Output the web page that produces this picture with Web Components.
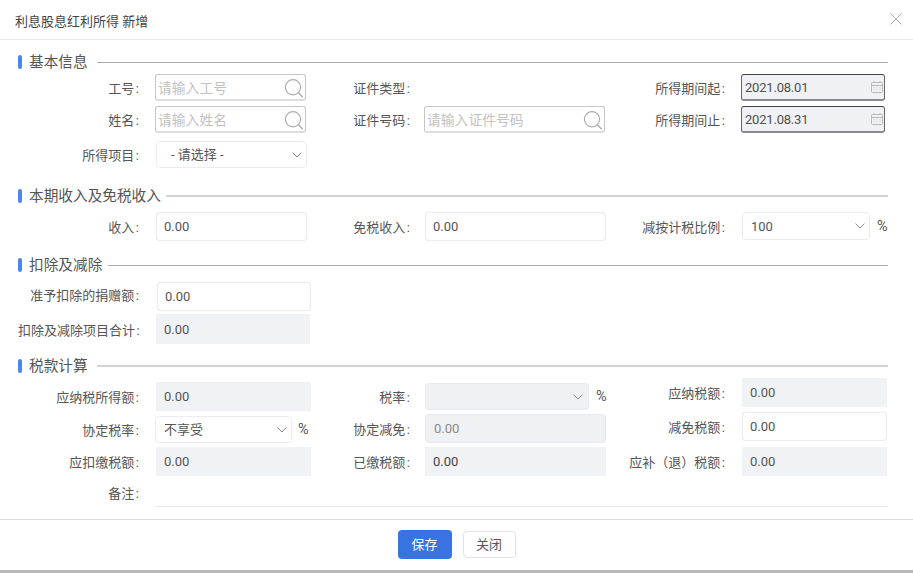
<!DOCTYPE html>
<html lang="zh-CN">
<head>
<meta charset="utf-8">
<title>利息股息红利所得 新增</title>
<style>
html,body{margin:0;height:100%;overflow:hidden;background:#b9b9b9}
body{font-family:Roboto,"Noto Sans CJK SC",sans-serif;font-size:13px;color:#555}
</style>
</head>
<body>
<tax-dialog heading="利息股息红利所得 新增">
  <tax-section heading="基本信息" style="margin-top:12px" gap="9">
    <tax-row style="margin-top:2px">
      <tax-field col="1" label="工号"><tax-input kind="search" placeholder="请输入工号" style="width:151px;height:27px;margin-left:-1px"></tax-input></tax-field>
      <tax-field col="2" label="证件类型"></tax-field>
      <tax-field col="3" label="所得期间起"><tax-input kind="date" value="2021.08.01" style="width:144px;height:27px"></tax-input></tax-field>
    </tax-row>
    <tax-row style="margin-top:5px">
      <tax-field col="1" label="姓名"><tax-input kind="search" placeholder="请输入姓名" style="width:151px;height:27px;margin-left:-1px"></tax-input></tax-field>
      <tax-field col="2" label="证件号码"><tax-input kind="search" placeholder="请输入证件号码" style="width:181px;height:27px"></tax-input></tax-field>
      <tax-field col="3" label="所得期间止"><tax-input kind="date" value="2021.08.31" style="width:144px;height:27px"></tax-input></tax-field>
    </tax-row>
    <tax-row style="margin-top:8px">
      <tax-field col="1" label="所得项目"><tax-input kind="select" value="- 请选择 -" indent="14" style="width:151px;height:27px"></tax-input></tax-field>
    </tax-row>
  </tax-section>

  <tax-section heading="本期收入及免税收入" style="margin-top:18px" gap="5" thick>
    <tax-row style="margin-top:6px">
      <tax-field col="1" label="收入"><tax-input kind="plain" value="0.00" style="width:151px;height:29px"></tax-input></tax-field>
      <tax-field col="2" label="免税收入"><tax-input kind="plain" value="0.00" style="width:181px;height:29px;margin-left:1px"></tax-input></tax-field>
      <tax-field col="3" label="减按计税比例"><tax-input kind="select" value="100" style="width:128px;height:28px;margin-left:1px"></tax-input><span class="unit" style="margin-left:7px">%</span></tax-field>
    </tax-row>
  </tax-section>

  <tax-section heading="扣除及减除" style="margin-top:14px" gap="6">
    <tax-row style="margin-top:7px">
      <tax-field col="1" label="准予扣除的捐赠额" shift="-2"><tax-input kind="plain" value="0.00" style="width:154px;height:29px;margin-left:1px"></tax-input></tax-field>
    </tax-row>
    <tax-row style="margin-top:3px">
      <tax-field col="1" label="扣除及减除项目合计"><tax-input kind="readonly" value="0.00" style="width:154px;height:30px"></tax-input></tax-field>
    </tax-row>
  </tax-section>

  <tax-section heading="税款计算" style="margin-top:12px" gap="9" thick>
    <tax-row style="margin-top:2px">
      <tax-field col="1" label="应纳税所得额" style="margin-top:4px"><tax-input kind="readonly" value="0.00" style="width:155px;height:29px"></tax-input></tax-field>
      <tax-field col="2" label="税率" style="margin-top:5px"><tax-input kind="select-off" style="width:164px;height:27px;margin-left:1px"></tax-input><span class="unit" style="margin-left:7px">%</span></tax-field>
      <tax-field col="3" label="应纳税额"><tax-input kind="readonly" value="0.00" style="width:145px;height:29px;margin-left:1px"></tax-input></tax-field>
    </tax-row>
    <tax-row style="margin-top:1px">
      <tax-field col="1" label="协定税率" style="margin-top:4px"><tax-input kind="select" value="不享受" style="width:137px;height:27px;margin-left:-1px"></tax-input><span class="unit" style="margin-left:6px">%</span></tax-field>
      <tax-field col="2" label="协定减免" style="margin-top:2px"><tax-input kind="off" value="0.00" style="width:181px;height:29px;margin-left:1px"></tax-input></tax-field>
      <tax-field col="3" label="减免税额"><tax-input kind="plain" value="0.00" style="width:145px;height:29px;margin-left:1px"></tax-input></tax-field>
    </tax-row>
    <tax-row style="margin-top:4px">
      <tax-field col="1" label="应扣缴税额"><tax-input kind="readonly" value="0.00" style="width:155px;height:29px"></tax-input></tax-field>
      <tax-field col="2" label="已缴税额"><tax-input kind="readonly" value="0.00" strong style="width:181px;height:29px;margin-left:1px"></tax-input></tax-field>
      <tax-field col="3" label="应补（退）税额"><tax-input kind="readonly" value="0.00" style="width:145px;height:29px;margin-left:1px"></tax-input></tax-field>
    </tax-row>
    <tax-row style="margin-top:4px">
      <tax-field col="1" label="备注" wide shift="0"><tax-input kind="remark" style="width:733px;height:27px;margin-left:-1px"></tax-input></tax-field>
    </tax-row>
  </tax-section>
  <tax-button slot="footer" primary>保存</tax-button>
  <tax-button slot="footer">关闭</tax-button>
</tax-dialog>

<script>
function shadow(el, html){
  const t = document.createElement('template');
  t.innerHTML = html;
  el.attachShadow({mode:'open'}).appendChild(t.content.cloneNode(true));
}
const esc = s => (s||'').replace(/[&<>"]/g, c => ({'&':'&amp;','<':'&lt;','>':'&gt;','"':'&quot;'}[c]));

customElements.define('tax-dialog', class extends HTMLElement {
  connectedCallback(){
    shadow(this, `<style>
      :host{display:flex;flex-direction:column;width:913px;height:570px;background:#fff;box-sizing:border-box}
      header{height:39px;flex:none;display:flex;align-items:center;justify-content:space-between;padding:0 11px 0 15px;border-bottom:1px solid #ebebeb;color:#444;line-height:1;font-size:13px}
      header span{margin-top:4px}
      svg{display:block;margin-top:-1px}
      main{flex:1;min-height:0;padding:0 25px 0 18px}
      footer{height:40px;flex:none;border-top:1px solid #dcdcdc;display:flex;justify-content:center;align-items:flex-start;gap:11px;padding-top:10px}
    </style>
    <header><span>${esc(this.getAttribute('heading'))}</span>
      <svg width="12" height="12" viewBox="0 0 12 12" fill="none" stroke="#b0b0b0" stroke-width="1"><path d="M.5.5l11 11M11.5.5l-11 11"/></svg>
    </header>
    <main><slot></slot></main>
    <footer><slot name="footer"></slot></footer>`);
  }
});

customElements.define('tax-section', class extends HTMLElement {
  connectedCallback(){
    const thick = this.hasAttribute('thick');
    shadow(this, `<style>
      :host{display:block}
      .head{display:flex;align-items:center;height:20px;color:#555;font-size:14.67px;line-height:20px}
      .bar{width:4px;height:14px;border-radius:2px;background:#4a86f0;margin-right:7px;flex:none}
      .line{flex:1;height:${thick?2:1}px;background:${thick?'#d2d2d2':'#a8a8a8'};margin-left:${this.getAttribute('gap')||9}px}
    </style>
    <div class="head"><i class="bar"></i><span>${esc(this.getAttribute('heading'))}</span><i class="line"></i></div>
    <slot></slot>`);
  }
});

customElements.define('tax-row', class extends HTMLElement {
  connectedCallback(){
    shadow(this, `<style>:host{display:flex;align-items:flex-start;margin-left:0}</style><slot></slot>`);
  }
});

customElements.define('tax-field', class extends HTMLElement {
  connectedCallback(){
    const shift = +(this.getAttribute('shift') ?? 3);
    shadow(this, `<style>
      :host{display:flex;align-items:center;flex:none;min-height:27px;color:#555;font-size:13px}
      :host([col="1"]){width:293px;--lw:121px;--lg:17px}
      :host([col="1"][wide]){width:870px}
      :host([col="2"]){width:295px;--lw:99px;--lg:14px}
      :host([col="3"]){width:282px;--lw:119px;--lg:16px}
      label{flex:none;width:var(--lw);margin-right:var(--lg);text-align:right;white-space:nowrap;margin-top:${shift}px;line-height:18px}
      b{font-weight:400;margin-left:1.5px}
      .ctl{display:flex;align-items:center;flex:1;min-width:0}
      ::slotted(.unit){font-size:14.5px;color:#555}
    </style>
    <label>${esc(this.getAttribute('label'))}<b>:</b></label><div class="ctl"><slot></slot></div>`);
  }
});

const ICON = {
  search:`<svg width="20" height="22" viewBox="0 0 20 22" fill="none" stroke="#adadad" stroke-width="1.2"><circle cx="10" cy="11.3" r="7.6"/><path d="M15.4 16.8l4.4 4.5" stroke-width="1.5"/></svg>`,
  date:`<svg width="12" height="12" viewBox="0 0 12 12" fill="none" stroke="#b9b9b9" stroke-width="1"><rect x=".5" y="1.5" width="11" height="10" rx="1"/><path d="M.5 4.5h11"/><path d="M2.5 6.5h1M5.5 6.5h1M8.5 6.5h1M2.5 8.5h1M5.5 8.5h1M8.5 8.5h1" stroke="#cfcfcf"/><path d="M3 0v2M9 0v2"/></svg>`,
  chev:`<svg width="10" height="6" viewBox="0 0 10 6" fill="none" stroke="#8a8a8a" stroke-width="1"><path d="M.6.6L5 5l4.4-4.4"/></svg>`
};

customElements.define('tax-input', class extends HTMLElement {
  connectedCallback(){
    const kind = this.getAttribute('kind') || 'plain';
    const v = this.getAttribute('value') || '';
    const ph = this.getAttribute('placeholder') || '';
    const indent = this.getAttribute('indent');
    const icon = kind==='search' ? ICON.search : kind==='date' ? ICON.date : kind.startsWith('select') ? ICON.chev : '';
    const pad = {search:'3px',date:'3px',plain:'7px',readonly:'8px',select:'8px','select-off':'8px',off:'8px',remark:'0'}[kind];
    shadow(this, `<style>
      :host{display:block;flex:none;box-sizing:border-box}
      .box{box-sizing:border-box;height:100%;display:flex;align-items:center;justify-content:space-between;padding:0 4px 0 ${indent?indent+'px':pad};border-radius:4px;line-height:1;color:#555;font-size:13px;background:#fff;white-space:nowrap}
      .search{border:1px solid #c6c6c6;border-bottom:2px solid #dcdcdc;border-radius:3px;padding:0 2px 0 2px}
      .date{border:1px solid #666;border-top-color:#444;border-bottom:2px solid #8b8b8b;border-radius:3px;background:#eff1f5;letter-spacing:-.2px;color:#505050;padding-right:1px}
      .plain{border:1px solid #ededed;box-shadow:0 0 1px #e6e6e6}
      .select{border:1px solid #ededed;padding-right:4px}
      .select-off{border:1px solid #e8eaee;background:#eff1f5;padding-right:5px}
      .off{border:1px solid #e6e8ec;background:#eff1f5;color:#8a8a8a}
      .readonly{background:#f1f2f6;border-radius:0;padding-top:0}
      .remark{border-bottom:1px solid #e8e8e8;border-radius:0}
      .ph{color:#c2c2c2;font-size:13.8px;transform:translateY(1.5px)}
      :host([strong]) .box{color:#444}
      svg{display:block;flex:none}
      span{transform:translateY(-.5px)}
    </style>
    <div class="box ${kind}">${ph?`<span class="ph">${esc(ph)}</span>`:`<span>${esc(v)}</span>`}${icon}</div>`);
  }
});

customElements.define('tax-button', class extends HTMLElement {
  connectedCallback(){
    const p = this.hasAttribute('primary');
    shadow(this, `<style>
      :host{display:flex;align-items:center;justify-content:center;box-sizing:border-box;font-size:13px;line-height:1;border-radius:4px;
        width:${p?54:53}px;height:${p?29:27}px;margin-top:${p?0:1}px;
        background:${p?'#3874e0':'#fff'};color:${p?'#fff':'#555'};border:${p?'0':'1px solid #e2e2e2'}}
    </style><slot></slot>`);
  }
});
</script>
</body>
</html>
